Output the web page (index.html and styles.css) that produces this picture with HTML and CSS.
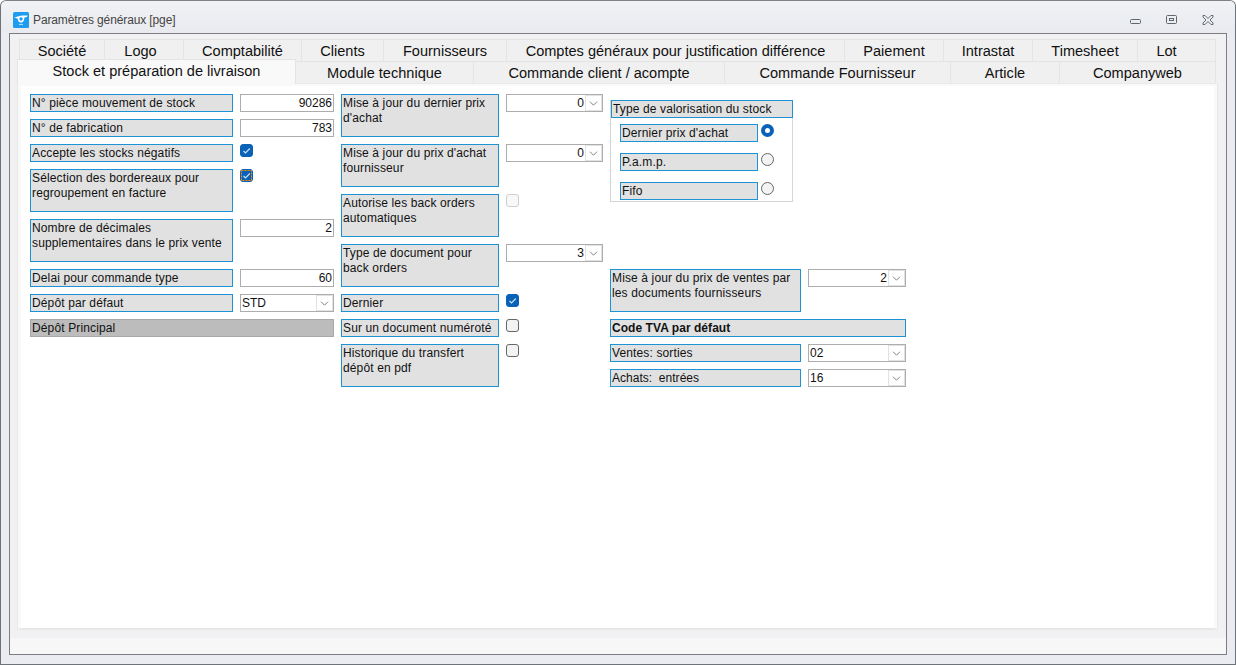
FILE: index.html
```html
<!DOCTYPE html>
<html lang="fr">
<head>
<meta charset="utf-8">
<title>Paramètres généraux [pge]</title>
<link rel="stylesheet" href="styles.css">
</head>
<body>
<svg class="defs" width="0" height="0" aria-hidden="true">
  <symbol id="chev" viewBox="0 0 16 16"><path d="M4 6.5 L8 10.5 L12 6.5" fill="none" stroke="#707070" stroke-width="1"/></symbol>
  <symbol id="tick" viewBox="0 0 13 13"><path d="M3.5 7 L5.5 9 L9.8 4.5" fill="none" stroke="#cfe3f5" stroke-width="1.1"/></symbol>
</svg>
<div class="window">
  <header class="titlebar">
    <svg class="appicon" viewBox="0 0 16 16" aria-hidden="true">
      <rect width="16" height="16" rx="1.5" fill="#1e9cf0"/>
      <path d="M1.5 5.5 C5 3.8 10 3.2 14.5 3.5 L14 5 L11.3 5.6 C11.6 8.6 9.8 10.6 8 10.6 C6 10.6 4.7 9 4.8 6.8 Z" fill="#fff"/>
      <circle cx="8" cy="7" r="1.7" fill="#1e9cf0"/>
      <path d="M6 12.4 H10" stroke="#bfe3fb" stroke-width="1"/>
    </svg>
    <span class="title">Paramètres généraux [pge]</span>
    <div class="controls">
      <svg class="ctl" viewBox="0 0 12 12" aria-hidden="true"><rect x="0.5" y="5.5" width="10" height="4" rx="1" fill="none" stroke="#5e6670"/></svg>
      <svg class="ctl" viewBox="0 0 12 12" aria-hidden="true"><rect x="0.5" y="1.5" width="10" height="8" rx="1" fill="none" stroke="#5e6670"/><rect x="3.5" y="4.5" width="4" height="2" fill="none" stroke="#5e6670"/></svg>
      <svg class="ctl" viewBox="0 0 12 12" aria-hidden="true"><path d="M1 1.5 H3 L6 4.5 L9 1.5 H11 V3 L8 6 L11 9 V10.5 H9 L6 7.5 L3 10.5 H1 V9 L4 6 L1 3 Z" fill="#eef0f3" stroke="#5e6670"/></svg>
    </div>
  </header>
  <div class="client">
    <nav class="tabs">
      <div class="tabrow tabrow-top">
        <div class="tab">Société</div><div class="tab tab-logo">Logo</div><div class="tab">Comptabilité</div><div class="tab">Clients</div><div class="tab">Fournisseurs</div><div class="tab">Comptes généraux pour justification différence</div><div class="tab">Paiement</div><div class="tab">Intrastat</div><div class="tab">Timesheet</div><div class="tab tab-lot">Lot</div>
      </div>
      <div class="tabrow tabrow-bottom">
        <div class="tab tab-active">Stock et préparation de livraison</div><div class="tab">Module technique</div><div class="tab">Commande client / acompte</div><div class="tab">Commande Fournisseur</div><div class="tab">Article</div><div class="tab">Companyweb</div>
      </div>
    </nav>
    <main class="panel">
      <section class="col col-1">
        <div class="row"><div class="label">N° pièce mouvement de stock</div><div class="field num">90286</div></div>
        <div class="row"><div class="label">N° de fabrication</div><div class="field num">783</div></div>
        <div class="row"><div class="label">Accepte les stocks négatifs</div><div class="check on"><svg><use href="#tick"/></svg></div></div>
        <div class="row"><div class="label tall">Sélection des bordereaux pour regroupement en facture</div><div class="check on focus"><svg class="ring" viewBox="0 0 13 13"><rect x="1.5" y="1.5" width="10" height="10" fill="none" stroke="#ff8c00" stroke-width="1" stroke-dasharray="2 1"/><path d="M3.5 7 L5.5 9 L9.8 4.5" fill="none" stroke="#cfe3f5" stroke-width="1.1"/></svg></div></div>
        <div class="row"><div class="label tall">Nombre de décimales supplementaires dans le prix vente</div><div class="field num">2</div></div>
        <div class="row"><div class="label">Delai pour commande type</div><div class="field num">60</div></div>
        <div class="row"><div class="label">Dépôt par défaut</div><div class="field combo"><span class="val">STD</span><span class="drop"><svg><use href="#chev"/></svg></span></div></div>
        <div class="row"><div class="label label-grey">Dépôt Principal</div></div>
      </section>
      <section class="col col-2">
        <div class="row"><div class="label tall">Mise à jour du dernier prix d'achat</div><div class="field combo"><span class="val right">0</span><span class="drop"><svg><use href="#chev"/></svg></span></div></div>
        <div class="row"><div class="label tall">Mise à jour du prix d'achat fournisseur</div><div class="field combo"><span class="val right">0</span><span class="drop"><svg><use href="#chev"/></svg></span></div></div>
        <div class="row"><div class="label tall">Autorise les back orders automatiques</div><div class="check disabled"></div></div>
        <div class="row"><div class="label tall">Type de document pour back orders</div><div class="field combo"><span class="val right">3</span><span class="drop"><svg><use href="#chev"/></svg></span></div></div>
        <div class="row"><div class="label">Dernier</div><div class="check on"><svg><use href="#tick"/></svg></div></div>
        <div class="row"><div class="label">Sur un document numéroté</div><div class="check"></div></div>
        <div class="row"><div class="label tall">Historique du transfert dépôt en pdf</div><div class="check"></div></div>
      </section>
      <section class="col col-3">
        <div class="group">
          <div class="label group-title">Type de valorisation du stock</div>
          <div class="opt"><div class="label">Dernier prix d'achat</div><span class="radio on"></span></div>
          <div class="opt"><div class="label">P.a.m.p.</div><span class="radio"></span></div>
          <div class="opt"><div class="label">Fifo</div><span class="radio"></span></div>
        </div>
        <div class="row"><div class="label tall">Mise à jour du prix de ventes par les documents fournisseurs</div><div class="field combo"><span class="val right">2</span><span class="drop"><svg><use href="#chev"/></svg></span></div></div>
        <div class="row"><div class="label label-bold">Code TVA par défaut</div></div>
        <div class="row"><div class="label">Ventes: sorties</div><div class="field combo"><span class="val">02</span><span class="drop"><svg><use href="#chev"/></svg></span></div></div>
        <div class="row"><div class="label tight">Achats:&nbsp; entrées</div><div class="field combo"><span class="val">16</span><span class="drop"><svg><use href="#chev"/></svg></span></div></div>
      </section>
    </main>
    <footer class="statusbar"></footer>
  </div>
</div>
</body>
</html>
```
FILE: styles.css
```css
* { box-sizing: border-box; }
html, body { margin: 0; padding: 0; background: #fff; }
body { width: 1236px; height: 665px; overflow: hidden; font-family: "Liberation Sans", Arial, sans-serif; font-size: 12px; color: #111; }
.defs { position: absolute; }

.window { width: 1236px; height: 665px; background: #ebecf1; border: 1px solid #6d7378; border-radius: 6px 6px 0 0; display: flex; flex-direction: column; padding: 0 8px 9px; border-top-color: #7d8287; }
.titlebar { height: 32px; flex: none; display: flex; align-items: center; background: linear-gradient(#f1f2f5, #e9eaef); margin: 0 -8px; padding: 5px 0 0 12px; border-radius: 6px 6px 0 0; }
.appicon { width: 16px; height: 16px; flex: none; }
.title { margin-left: 4px; color: #444; font-size: 12px; letter-spacing: -.12px; }
.controls { margin-left: auto; display: flex; gap: 24px; padding-right: 21px; }
.ctl { width: 12px; height: 12px; }

.client { flex: 1; display: flex; flex-direction: column; background: #f1f1f4; border: 1px solid #7c7f82; min-height: 0; }

.tabs { flex: none; padding: 5px 8px 0 7px; height: 50px; }
.tabrow { display: grid; height: 22px; }
.tabrow-top { margin-left: 2px; grid-template-columns: 86px 79px 118px 82px 123px 338px 99px 89px 105px 78px; }
.tabrow-bottom { grid-template-columns: 279px 178px 251px 226px 109px 156px; }
.tab { display: flex; align-items: center; justify-content: center; background: #f0f0f0; border: 1px solid #e4e4e4; border-left-width: 0; font-size: 14.55px; color: #111; }
.tabrow-top .tab:first-child { border-left-width: 1px; }
.tabrow-top .tab { border-bottom-width: 0; }
.tabrow-top .tab-logo { padding-right: 7px; }
.tabrow-top .tab-lot { padding-right: 20px; }
.tab-active { background: #f9f9f9; border-width: 1px 1px 0 1px; margin-top: -2px; height: 25px; padding-bottom: 2px; position: relative; z-index: 1; }

.panel { flex: none; height: 547px; margin: -1px 8px 0 7px; background: #fff; border: 4px solid #f9f9f9; border-top-width: 3px; border-bottom: 2px solid #e6e6e6; outline: 1px solid #e9e9e9; outline-offset: -1px; padding: 8px 0 0 9px; display: flex; gap: 7px; align-items: flex-start; }
.col { display: flex; flex-direction: column; gap: 7px; }
.col-1 { width: 304px; }
.col-2 { width: 262px; }
.col-3 { width: 296px; }
.row { display: flex; gap: 7px; align-items: flex-start; }

.label { border: 1px solid #1d93d3; background: #e1e1e1; height: 18px; padding: 1px 1px 0; line-height: 15px; flex: none; color: #111; letter-spacing: .13px; }
.tall { height: 43px; }
.tight { letter-spacing: .02px; }
.col-1 .label { width: 203px; }
.col-2 .label { width: 158px; }
.col-3 .row .label { width: 191px; }
.col-1 .label.label-grey { width: 304px; background: #bcbcbc; border-color: #a9a9a9; }
.col-3 .row .label.label-bold { width: 296px; font-weight: bold; letter-spacing: .05px; }

.field { height: 18px; border: 1px solid #adadad; background: #fff; line-height: 15px; flex: 1; min-width: 0; display: flex; }
.num { justify-content: flex-end; padding: 1px 1px 0 0; }
.combo .val { flex: 1; padding: 1px 0 0 1px; }
.combo .val.right { text-align: right; padding: 1px 1px 0 0; }
.drop { flex: none; width: 17px; height: 16px; background: #fff; border: 1px solid #e2e2e2; display: block; }
.drop svg { display: block; width: 15px; height: 14px; }

.check { width: 13px; height: 13px; flex: none; border: 1px solid #666; border-radius: 3px; background: #f3f3f3; }
.check svg { display: block; width: 13px; height: 13px; margin: -1px; }
.check.on { background: #0a62b8; border-color: #0a62b8; }
.check.disabled { background: #f8f8f8; border-color: #cfcfcf; }

.group { width: 183px; height: 102px; margin: 6px 0 60px; border: 1px solid #d6d6d6; border-top: 0; padding-bottom: 1px; }
.label.group-title { height: 18px; width: 182px; padding-left: 1px; }
.opt { display: flex; gap: 3px; margin: 6px 0 11px 9px; align-items: flex-start; }
.opt .label { width: 138px; }
.opt + .opt { margin-top: 11px; }
.radio { width: 13px; height: 13px; border-radius: 50%; border: 1px solid #666; background: #f3f3f3; flex: none; }
.radio.on { background: #fff; border: 4px solid #0a62b8; }

.statusbar { flex: 1; background: #f7f7f7; margin-top: 8px; }
```
